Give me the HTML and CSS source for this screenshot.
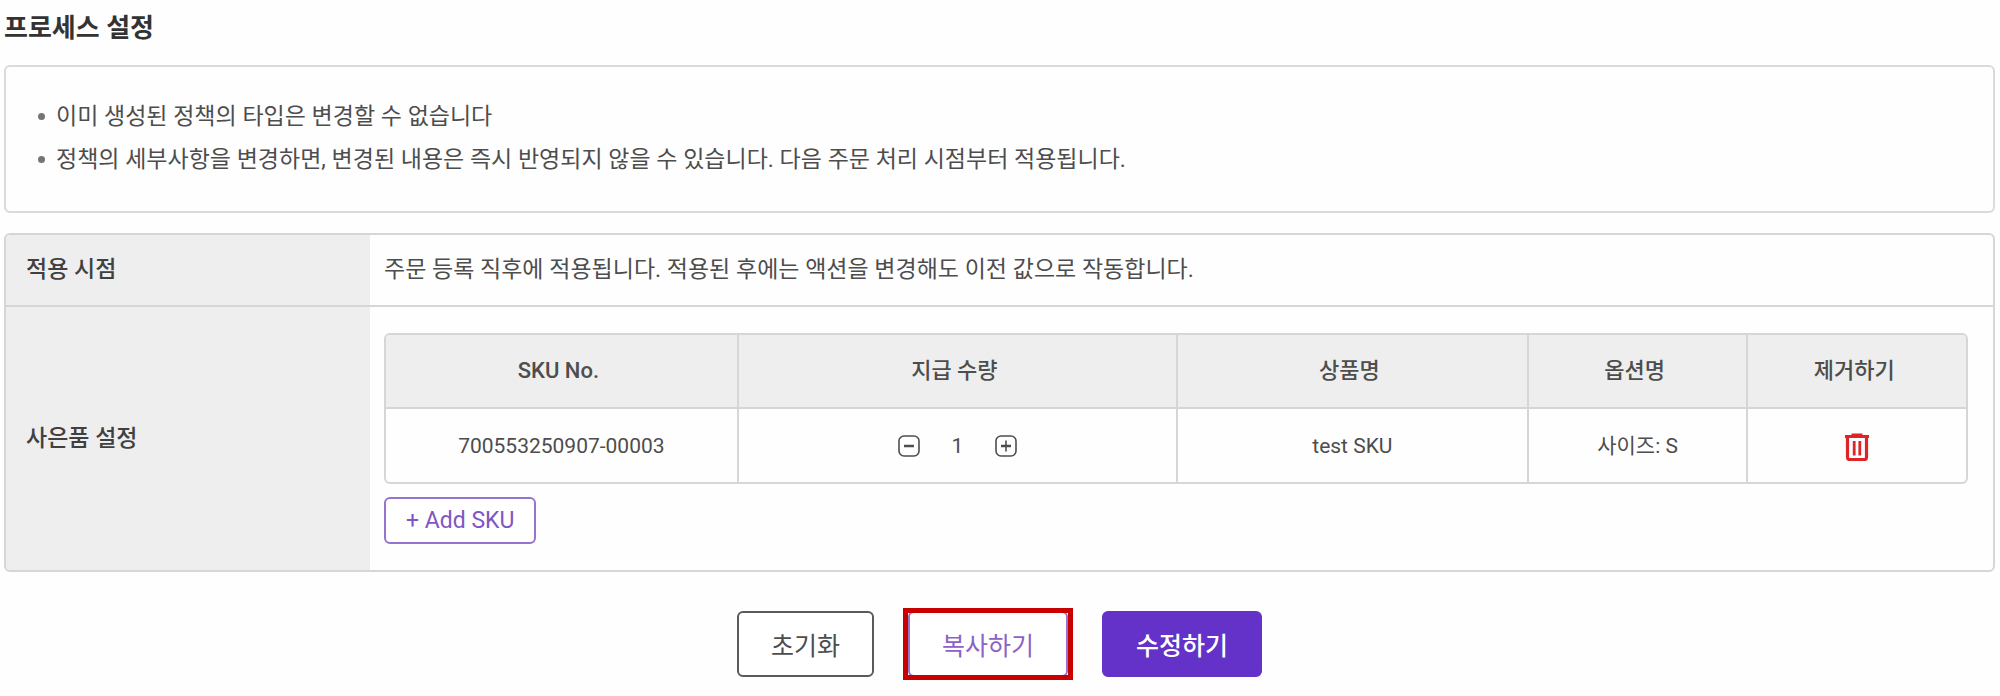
FILE: index.html
```html
<!DOCTYPE html>
<html lang="ko">
<head>
    <meta charset="UTF-8">
    <meta name="viewport" content="width=device-width, initial-scale=1.0">
    <title>프로세스 설정</title>
    <link rel="stylesheet" href="styles.css">
</head>
<body>

<main class="container">
    <h1>프로세스 설정</h1>

    <ul class="notice">
        <li>이미 생성된 정책의 타입은 변경할 수 없습니다</li>
        <li>정책의 세부사항을 변경하면, 변경된 내용은 즉시 반영되지 않을 수 있습니다. 다음 주문 처리 시점부터 적용됩니다.</li>
    </ul>

    <div class="settings">
        <div class="row">
            <div class="label">적용 시점</div>
            <div class="value">주문 등록 직후에 적용됩니다. 적용된 후에는 액션을 변경해도 이전 값으로 작동합니다.</div>
        </div>
        <div class="row">
            <div class="label">사은품 설정</div>
            <div class="value gift">
                <table class="sku-table">
                    <colgroup>
                        <col class="col-sku">
                        <col class="col-qty">
                        <col class="col-name">
                        <col class="col-option">
                        <col class="col-remove">
                    </colgroup>
                    <thead>
                        <tr>
                            <th>SKU No.</th>
                            <th>지급 수량</th>
                            <th>상품명</th>
                            <th>옵션명</th>
                            <th>제거하기</th>
                        </tr>
                    </thead>
                    <tbody>
                        <tr>
                            <td>700553250907-00003</td>
                            <td>
                                <div class="quantity">
                                    <button type="button" class="icon-button" aria-label="수량 감소">
                                        <svg width="22" height="22" viewBox="0 0 22 22" fill="none" stroke="#4d4d4d">
                                            <rect x="1" y="1" width="20" height="20" rx="5" stroke-width="1.6"/>
                                            <path d="M6 11h10" stroke-width="2.6"/>
                                        </svg>
                                    </button>
                                    <span>1</span>
                                    <button type="button" class="icon-button" aria-label="수량 증가">
                                        <svg width="22" height="22" viewBox="0 0 22 22" fill="none" stroke="#4d4d4d">
                                            <rect x="1" y="1" width="20" height="20" rx="5" stroke-width="1.6"/>
                                            <path d="M6 11h10" stroke-width="2.4"/>
                                            <path d="M11 5.5v11" stroke-width="1.6"/>
                                        </svg>
                                    </button>
                                </div>
                            </td>
                            <td>test SKU</td>
                            <td>사이즈: S</td>
                            <td>
                                <button type="button" class="icon-button" aria-label="제거하기">
                                    <svg width="26" height="28" viewBox="0 0 26 28" fill="none" stroke="#dc2429">
                                        <path d="M1 3.5h24" stroke-width="3"/>
                                        <path d="M7.5 1.5h11" stroke-width="2"/>
                                        <path d="M3.5 4v20.5q0 2 2 2h15q2 0 2-2V4" stroke-width="3.2"/>
                                        <path d="M10.2 8v14.5M15.8 8v14.5" stroke-width="2.8"/>
                                    </svg>
                                </button>
                            </td>
                        </tr>
                    </tbody>
                </table>
                <button type="button" class="add-button">+ Add SKU</button>
            </div>
        </div>
    </div>

    <div class="actions">
        <button type="button" class="button">초기화</button>
        <div class="highlight">
            <button type="button" class="button button-copy">복사하기</button>
        </div>
        <button type="button" class="button button-primary">수정하기</button>
    </div>
</main>

</body>
</html>
```
FILE: styles.css
```css
* {
    box-sizing: border-box;
}
body {
    font-family: Roboto, 'Noto Sans CJK KR', sans-serif;
    background-color: #fefefe;
    color: #4d4d4d;
    font-size: 23px;
    line-height: 34px;
    margin: 0;
}
button {
    font-family: inherit;
    cursor: pointer;
}
.container {
    padding: 9px 5px 16px 4px;
}
h1 {
    color: #333;
    font-size: 26px;
    font-weight: 700;
    line-height: 38px;
    margin: 0 0 18px;
}

/* Notice box */
.notice {
    list-style: none;
    border: 2px solid #dadada;
    border-radius: 6px;
    margin: 0 0 20px;
    padding: 28px 32px 30px;
}
.notice li {
    display: flex;
    align-items: center;
    gap: 11px;
    line-height: 43px;
}
.notice li::before {
    content: "";
    width: 7px;
    height: 7px;
    border-radius: 50%;
    background-color: #757575;
}

/* Settings rows */
.settings {
    border: 2px solid #d6d6d6;
    border-radius: 6px;
    overflow: hidden;
}
.row {
    display: flex;
}
.row + .row {
    border-top: 2px solid #d6d6d6;
}
.label {
    display: flex;
    align-items: center;
    flex: 0 0 364px;
    padding: 0 20px;
    background-color: #eee;
    color: #404040;
    font-weight: 500;
}
.value {
    flex: 1;
    padding: 18px 14px;
}
.gift {
    padding: 26px 25px 26px 14px;
}

/* SKU table */
.sku-table {
    table-layout: fixed;
    width: 100%;
    border: 2px solid #d6d6d6;
    border-radius: 6px;
    border-spacing: 0;
    overflow: hidden;
    font-size: 21px;
    text-align: center;
}
.col-sku,
.col-name {
    width: 22.2%;
}
.col-qty {
    width: 27.8%;
}
.sku-table th,
.sku-table td {
    height: 73px;
    padding: 0;
}
.sku-table th {
    height: 74px;
    padding-right: 6px;
    background-color: #eee;
    border-bottom: 2px solid #d6d6d6;
    font-size: 22px;
    font-weight: 500;
}
.sku-table th + th,
.sku-table td + td {
    border-left: 2px solid #d6d6d6;
}
.quantity {
    display: flex;
    align-items: center;
    justify-content: center;
    gap: 20px;
}
.quantity span {
    width: 3ch;
}
.icon-button {
    background: none;
    border: none;
    padding: 0;
    vertical-align: middle;
}
.icon-button svg {
    display: block;
}
.add-button {
    display: block;
    height: 47px;
    margin-top: 13px;
    padding: 0 20px;
    background-color: #fff;
    border: 2px solid #9673ce;
    border-radius: 6px;
    color: #8055c4;
    font-size: 23px;
}

/* Bottom buttons */
.actions {
    display: flex;
    justify-content: center;
    gap: 32px;
    margin-top: 39px;
}
.button {
    display: block;
    height: 66px;
    padding: 0 32px;
    background-color: #fff;
    border: 2px solid #5a5a5a;
    border-radius: 6px;
    color: #4d4d4d;
    font-size: 25px;
}
.button-copy {
    border-color: #9673ce;
    color: #8a63c8;
}
.button-primary {
    background-color: #6432c8;
    border-color: #6432c8;
    color: #fff;
    font-weight: 500;
}
.highlight {
    padding: 0 2px;
    outline: 5px solid #c80000;
    outline-offset: -2px;
}
```
